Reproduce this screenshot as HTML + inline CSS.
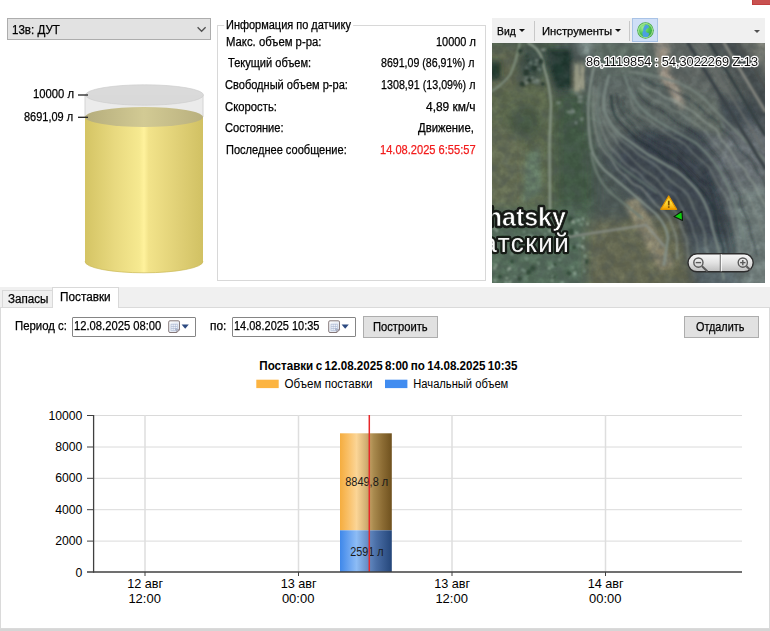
<!DOCTYPE html>
<html lang="ru">
<head>
<meta charset="utf-8">
<title>Поставки</title>
<style>
html,body{margin:0;padding:0;}
body{width:770px;height:631px;overflow:hidden;position:relative;background:#fff;
 font-family:"Liberation Sans",sans-serif;font-size:11px;color:#000;}
.a{position:absolute;white-space:nowrap;line-height:1;}
.t{position:absolute;white-space:nowrap;line-height:14px;height:14px;font-size:12px;transform-origin:0 0;-webkit-text-stroke:0.250px currentColor;}
.r{text-align:right;}
</style>
</head>
<body>

<!-- top-right red fragment -->
<div class="a" style="left:752px;top:0;width:18px;height:4.700px;background:#c85150;border-left:1px solid #c03c3c;border-bottom:1px solid #c24040;box-sizing:border-box;"></div>

<!-- combo box -->
<div class="a" style="left:7px;top:18px;width:204px;height:21.700px;background:#e2e2e2;border:1px solid #adadad;box-sizing:border-box;"></div>
<div class="t" style="left:11.8px;top:22.5px;font-size:12.5px;transform:scaleX(0.9251);">13в: ДУТ</div>
<svg class="a" style="left:195px;top:25px;" width="14" height="9" viewBox="0 0 14 9"><path d="M2.600 2.300 L6.600 6.300 L10.600 2.300" fill="none" stroke="#505050" stroke-width="1.300"/></svg>

<!-- cylinder -->
<svg class="a" style="left:0;top:70px;" width="216" height="215" viewBox="0 70 216 215">
 <defs>
  <linearGradient id="liq" x1="0" x2="1" y1="0" y2="0">
   <stop offset="0" stop-color="#d4c464"/>
   <stop offset="0.25" stop-color="#e8d97f"/>
   <stop offset="0.46" stop-color="#f6e990"/>
   <stop offset="0.5" stop-color="#fff29c"/>
   <stop offset="0.54" stop-color="#f2e38a"/>
   <stop offset="0.8" stop-color="#dfcf75"/>
   <stop offset="1" stop-color="#d1c163"/>
  </linearGradient>
  <linearGradient id="liqtop" x1="0" x2="1" y1="0" y2="0">
   <stop offset="0" stop-color="#b5ad7c"/>
   <stop offset="0.5" stop-color="#d2ca94"/>
   <stop offset="1" stop-color="#b9b07e"/>
  </linearGradient>
 </defs>
 <!-- glass body -->
 <path d="M85 95 L85 117 A59 10 0 0 0 203 117 L203 95 Z" fill="#ebebeb"/>
 <path d="M85 95 L85 117 M203 95 L203 117" stroke="#d4d4d4" stroke-width="1" fill="none"/>
 <!-- liquid body -->
 <path d="M85 117 L85 261.500 A59 11.300 0 0 0 203 261.500 L203 117 Z" fill="url(#liq)"/>
 <path d="M85 261.500 A59 11.300 0 0 0 203 261.500" fill="none" stroke="#cbb956" stroke-width="1" stroke-opacity="0.700"/>
 <!-- liquid top -->
 <ellipse cx="144" cy="117" rx="59" ry="10" fill="url(#liqtop)"/>
 <!-- glass top -->
 <ellipse cx="144.500" cy="95" rx="59" ry="10.200" fill="#d8d8d8" fill-opacity="0.95" stroke="#cfcfcf" stroke-width="0.700"/>
 <line x1="78" y1="95" x2="88" y2="95" stroke="#222" stroke-width="1.300"/>
 <line x1="78" y1="117.300" x2="88" y2="117.300" stroke="#222" stroke-width="1.300"/>
</svg>
<div class="t" style="left:33.1px;top:86.9px;font-size:12.3px;transform:scaleX(0.9156);">10000 л</div>
<div class="t" style="left:24.0px;top:109.5px;font-size:12.3px;transform:scaleX(0.8925);">8691,09 л</div>

<!-- group box -->
<div class="a" style="left:217px;top:24.600px;width:266.500px;height:254.700px;border:1px solid #d8d8d8;background:#fff;"></div>
<div class="t" style="left:226.2px;top:18.0px;font-size:12px;transform:scaleX(0.9147);background:#fff;box-shadow:-2px 0 0 #fff,2px 0 0 #fff;">Информация по датчику</div>
<div class="t" style="left:226.2px;top:35.3px;font-size:12px;transform:scaleX(0.9436);">Макс. объем р-ра:</div>
<div class="t" style="left:228.0px;top:56.3px;font-size:12px;transform:scaleX(0.9212);">Текущий объем:</div>
<div class="t" style="left:225.4px;top:78.1px;font-size:12px;transform:scaleX(0.9211);">Свободный объем р-ра:</div>
<div class="t" style="left:225.4px;top:99.7px;font-size:12px;transform:scaleX(0.9411);">Скорость:</div>
<div class="t" style="left:225.4px;top:121.3px;font-size:12px;transform:scaleX(0.9269);">Состояние:</div>
<div class="t" style="left:226.4px;top:142.9px;font-size:12px;transform:scaleX(0.9208);">Последнее сообщение:</div>
<div class="t" style="left:435.7px;top:35.3px;font-size:12px;transform:scaleX(0.9121);">10000 л</div>
<div class="t" style="left:381.1px;top:56.3px;font-size:12px;transform:scaleX(0.8847);">8691,09 (86,91%) л</div>
<div class="t" style="left:381.2px;top:78.1px;font-size:12px;transform:scaleX(0.8928);">1308,91 (13,09%) л</div>
<div class="t" style="left:426.0px;top:99.7px;font-size:12px;transform:scaleX(0.9964);">4,89 км/ч</div>
<div class="t" style="left:418.0px;top:121.3px;font-size:12px;transform:scaleX(0.9421);">Движение,</div>
<div class="t" style="left:380.0px;top:142.9px;font-size:12px;transform:scaleX(0.9245);color:#f21c1c;">14.08.2025 6:55:57</div>

<!-- map toolbar -->
<div class="a" style="left:492px;top:18px;width:273px;height:25px;background:#f0f0f0;"></div>
<div class="t" style="left:497.1px;top:23.6px;font-size:11.3px;transform:scaleX(0.915);">Вид</div>
<div class="a" style="left:519px;top:29px;width:0;height:0;border-left:3px solid transparent;border-right:3px solid transparent;border-top:3.500px solid #111;"></div>
<div class="a" style="left:534px;top:21px;width:1px;height:20px;background:#c8c8c8;"></div>
<div class="t" style="left:541.8px;top:23.6px;font-size:11.3px;transform:scaleX(0.995);">Инструменты</div>
<div class="a" style="left:615px;top:28.500px;width:0;height:0;border-left:3px solid transparent;border-right:3px solid transparent;border-top:3.500px solid #111;"></div>
<div class="a" style="left:629px;top:21px;width:1px;height:20px;background:#c8c8c8;"></div>
<div class="a" style="left:632px;top:18px;width:26px;height:24px;background:#cfdff7;border:1px solid #a9c3e6;box-sizing:border-box;"></div>
<svg class="a" style="left:635px;top:20px;" width="21" height="21" viewBox="-10.500 -10.500 21 21">
 <defs><radialGradient id="gl" cx="0.35" cy="0.3" r="0.8"><stop offset="0" stop-color="#a8ec9a"/><stop offset="0.5" stop-color="#4fcb55"/><stop offset="1" stop-color="#2f9e3c"/></radialGradient></defs>
 <circle cx="0" cy="0" r="8.300" fill="#45ad49"/>
 <circle cx="0" cy="0" r="7" fill="url(#gl)" stroke="#cdf0b4" stroke-width="0.800"/>
 <path d="M0.500,-6 C-1.500,-4.500 -2.800,-2 -2.200,0 C-3.800,2 -3.200,5 -1.800,6.600 L2.200,6.600 C3.200,5.500 3.800,4 3.200,2.600 C1.500,2.400 0,1.500 0.200,0 C0.500,-1.500 2,-2.500 3.600,-3 C3.200,-5 2,-6 0.500,-6Z" fill="#4d9fe0"/>
</svg>
<div class="a" style="left:754px;top:29.700px;width:0;height:0;border-left:3px solid transparent;border-right:3px solid transparent;border-top:3px solid #505050;"></div>

<!-- map -->
<svg class="a" style="left:492px;top:43px;" width="273" height="240" viewBox="0 0 273 240" font-family="Liberation Sans, sans-serif">
 <defs>
  <filter id="b8" x="-20%" y="-20%" width="140%" height="140%"><feGaussianBlur stdDeviation="6"/></filter>
  <filter id="b3" x="-20%" y="-20%" width="140%" height="140%"><feGaussianBlur stdDeviation="2.500"/></filter>
  <filter id="b1" x="-20%" y="-20%" width="140%" height="140%"><feGaussianBlur stdDeviation="0.800"/></filter>
  <filter id="b05" x="-5%" y="-20%" width="110%" height="140%"><feGaussianBlur stdDeviation="0.450"/></filter>
  <filter id="nz" x="0" y="0" width="100%" height="100%">
   <feTurbulence type="fractalNoise" baseFrequency="0.110" numOctaves="3" seed="7" result="n"/>
   <feColorMatrix type="matrix" values="0 0 0 0 0.500  0 0 0 0 0.500  0 0 0 0 0.500  1.600 0 0 0 -0.550"/>
  </filter>
  <filter id="nz2" x="0" y="0" width="100%" height="100%">
   <feTurbulence type="fractalNoise" baseFrequency="0.090" numOctaves="3" seed="23" result="n"/>
   <feColorMatrix type="matrix" values="0 0 0 0 0.070  0 0 0 0 0.090  0 0 0 0 0.090  0 1.600 0 0 -0.600"/>
  </filter>
  <linearGradient id="zg" x1="0" x2="0" y1="0" y2="1"><stop offset="0" stop-color="#fafafa"/><stop offset="0.5" stop-color="#e2e2e2"/><stop offset="1" stop-color="#bdbdbd"/></linearGradient>
  <linearGradient id="wg" x1="0" x2="0" y1="0" y2="1"><stop offset="0" stop-color="#f6b000"/><stop offset="0.450" stop-color="#ffe040"/><stop offset="1" stop-color="#f5a000"/></linearGradient>
  <clipPath id="mc"><rect x="0" y="0" width="273" height="240"/></clipPath>
 </defs>
 <g clip-path="url(#mc)">
 <rect x="0" y="0" width="273" height="240" fill="#485350"/>
 <g filter="url(#b8)">
  <rect x="-20" y="-20" width="85" height="60" fill="#48584a"/>
  <rect x="-20" y="30" width="82" height="140" fill="#586349"/>
  <rect x="-20" y="5" width="48" height="40" fill="#5c624c"/>
  <rect x="-20" y="85" width="50" height="80" fill="#61674f"/>
  <circle cx="33" cy="80" r="17" fill="#42533f"/>
    <polygon points="30,4 50,6 54,38 28,40 24,24" fill="#394942"/>
  <rect x="62" y="48" width="40" height="125" fill="#3d5240"/>
  <polygon points="100,25 230,25 290,100 290,260 200,260 150,170 100,100" fill="#41494f"/>
  <polygon points="95,-10 205,-10 218,60 192,88 150,84 122,112 100,100" fill="#58625f"/>
  <polygon points="100,-10 165,-10 170,30 105,32" fill="#5a6860"/>
  <polygon points="125,92 190,90 235,130 240,200 190,200 150,150 122,122" fill="#37404a"/>
  <polygon points="150,-20 290,-20 290,60 180,50" fill="#5c625e"/>
  <polygon points="215,90 290,80 290,200 240,180" fill="#646a6e"/>
  <polygon points="215,-10 250,-10 290,60 290,110" fill="#3f4648"/>
  <polygon points="245,-10 290,-10 290,50" fill="#76786f"/>
  <rect x="-20" y="165" width="120" height="95" fill="#4f6654"/>
  <polygon points="95,178 185,172 205,260 95,260" fill="#60644e"/>
  <polygon points="200,200 290,190 290,260 215,260" fill="#566468"/>
  <polygon points="240,150 290,140 290,260 250,260" fill="#6c7876"/>
 </g>
 <g filter="url(#b3)">
  <polygon points="-3,18 8,18 9,36 -3,38" fill="#1c3028"/>
  <polygon points="54,6 80,6 82,44 64,47 58,28" fill="#1b332a"/>
  <polygon points="132,160 146,154 182,222 168,228" fill="#88826a"/>
  <polygon points="163,-2 176,-2 178,30 196,62 188,66 168,34" fill="#968c7e"/>
  <polygon points="185,40 225,55 235,95 200,85" fill="#5e6862"/>
  <rect x="82" y="20" width="10" height="30" fill="#8a8c78"/>
  <polygon points="84,-2 100,-2 98,12 86,10" fill="#7a8a86"/>
  <polygon points="35,110 48,105 50,150 30,160" fill="#5f7460"/>
 </g>
 <rect x="0" y="0" width="273" height="240" filter="url(#nz)" opacity="0.550" style="mix-blend-mode:overlay"/>
 <rect x="0" y="0" width="273" height="240" filter="url(#nz2)" opacity="0.600"/>
 <g filter="url(#b1)" fill="none" stroke-linecap="round">
  <path d="M101.5,43.3 C101.5,44.8 101.6,48.9 101.4,52.2 C101.2,55.6 100.4,59.9 100.4,63.3 C100.4,66.6 101.0,69.3 101.4,72.4 C101.8,75.5 102.0,78.7 102.6,82.0 C103.2,85.3 103.8,88.7 104.8,92.2 C105.8,95.6 106.9,99.6 108.4,102.6 C109.9,105.6 112.2,108.2 114.0,110.3 C115.7,112.5 117.0,112.7 119.0,115.5 C121.0,118.4 123.8,124.4 126.1,127.2 C128.4,130.1 130.5,130.3 132.9,132.6 C135.4,134.8 138.2,138.7 140.8,140.7 C143.4,142.7 146.3,142.6 148.8,144.6 C151.2,146.5 153.1,149.2 155.7,152.2 C158.2,155.1 161.7,159.7 164.1,162.0 C166.4,164.4 167.4,164.4 169.5,166.4 C171.6,168.5 174.9,171.5 176.8,174.5 C178.6,177.4 179.5,180.8 180.7,184.2 C182.0,187.6 183.6,191.2 184.3,194.8 C185.0,198.4 184.7,202.3 184.9,205.7 C185.0,209.1 185.1,213.5 185.2,215.1" stroke="#95a098" stroke-width="2.1" stroke-opacity="0.56"/>
  <path d="M105.8,44.9 C105.5,46.9 104.1,53.3 103.7,56.7 C103.3,60.1 102.9,62.1 103.3,65.2 C103.8,68.2 105.2,71.5 106.2,74.8 C107.2,78.1 108.1,81.8 109.3,85.1 C110.4,88.5 111.8,91.6 113.2,94.7 C114.6,97.8 115.7,100.8 117.7,103.6 C119.7,106.3 123.2,108.8 125.2,111.0 C127.1,113.2 127.3,114.6 129.4,116.8 C131.4,119.0 134.6,121.9 137.5,124.1 C140.4,126.4 144.2,127.8 147.0,130.2 C149.8,132.5 151.5,135.9 154.0,138.3 C156.6,140.7 159.8,142.1 162.5,144.5 C165.2,147.0 168.0,150.1 170.1,152.9 C172.2,155.7 172.9,158.8 174.9,161.3 C177.0,163.9 180.7,165.7 182.7,168.1 C184.6,170.5 185.4,172.7 186.7,175.7 C188.0,178.8 188.9,182.8 190.2,186.4 C191.5,189.9 193.8,193.6 194.7,197.0 C195.5,200.3 195.1,203.0 195.4,206.4 C195.7,209.8 196.4,215.5 196.6,217.3" stroke="#95a098" stroke-width="2.2" stroke-opacity="0.40"/>
  <path d="M107.2,49.3 C107.0,51.0 105.5,55.9 105.7,59.3 C105.8,62.8 107.0,66.9 108.1,70.2 C109.2,73.4 110.9,75.8 112.3,78.7 C113.7,81.7 114.8,85.2 116.5,87.8 C118.2,90.5 120.8,92.2 122.5,94.7 C124.2,97.1 124.8,100.1 126.8,102.8 C128.9,105.4 132.3,108.2 134.8,110.6 C137.3,113.1 139.4,115.1 141.8,117.6 C144.1,120.0 146.4,122.8 149.2,125.1 C152.0,127.4 155.5,129.1 158.3,131.1 C161.1,133.1 163.6,134.6 166.0,137.0 C168.3,139.4 169.8,142.9 172.6,145.4 C175.4,147.9 180.2,149.2 182.8,151.9 C185.4,154.6 186.7,158.7 188.2,161.6 C189.8,164.4 190.1,166.1 191.9,169.1 C193.6,172.0 197.1,175.8 198.7,179.3 C200.4,182.8 200.7,187.0 201.7,190.0 C202.8,193.1 204.1,194.5 204.7,197.7 C205.4,200.9 205.3,205.2 205.7,209.1 C206.1,213.0 206.9,219.2 207.2,221.2" stroke="#95a098" stroke-width="1.3" stroke-opacity="0.55"/>
  <path d="M111.0,52.4 C111.0,53.9 111.0,58.6 111.2,61.7 C111.4,64.8 111.1,67.8 112.1,71.1 C113.2,74.3 115.3,78.1 117.3,81.3 C119.3,84.4 122.0,87.2 124.0,89.9 C126.1,92.6 127.1,95.0 129.6,97.4 C132.1,99.8 136.0,101.9 138.8,104.2 C141.6,106.5 143.5,109.1 146.2,111.2 C148.9,113.3 152.1,114.9 154.9,116.8 C157.8,118.6 160.7,120.1 163.3,122.3 C166.0,124.5 168.3,127.4 170.9,130.0 C173.5,132.6 176.4,135.8 179.0,138.1 C181.6,140.3 183.8,141.4 186.5,143.6 C189.3,145.9 193.1,148.3 195.5,151.5 C197.9,154.7 199.2,159.6 200.7,162.9 C202.2,166.2 203.0,168.1 204.5,171.1 C205.9,174.2 207.8,177.7 209.2,181.1 C210.6,184.4 212.2,187.9 213.0,191.4 C213.7,194.9 213.0,198.4 213.5,202.0 C214.1,205.5 215.6,209.3 216.2,212.8 C216.9,216.2 217.4,221.0 217.6,222.7" stroke="#8a968e" stroke-width="2.3" stroke-opacity="0.48"/>
  <path d="M119.1,52.8 C119.4,54.9 119.7,61.4 120.5,64.9 C121.2,68.5 121.7,70.8 123.6,74.0 C125.6,77.1 129.5,81.1 132.2,83.9 C134.8,86.7 136.8,88.5 139.3,90.8 C141.8,93.1 144.1,95.4 147.2,97.6 C150.3,99.8 154.7,102.0 157.8,104.0 C160.9,106.0 163.2,107.8 165.9,109.7 C168.5,111.7 170.6,113.8 173.8,115.8 C177.0,117.7 181.8,119.2 185.0,121.3 C188.2,123.5 190.3,126.0 192.9,128.6 C195.4,131.2 197.7,134.3 200.1,137.0 C202.6,139.7 205.2,142.1 207.6,144.7 C209.9,147.3 212.0,149.8 214.0,152.5 C216.0,155.3 218.1,158.2 219.6,161.3 C221.1,164.4 222.1,167.3 223.0,171.1 C224.0,174.8 224.7,179.8 225.4,183.6 C226.2,187.4 226.6,190.5 227.5,194.0 C228.5,197.6 230.7,201.1 231.3,204.8 C231.8,208.4 230.2,212.4 230.9,215.9 C231.6,219.5 234.8,224.4 235.5,226.1" stroke="#1f2b30" stroke-width="2.4" stroke-opacity="0.60"/>
  <path d="M124.6,51.5 C125.0,53.5 125.7,59.8 127.1,63.4 C128.5,67.1 130.8,70.5 132.9,73.5 C135.1,76.4 137.7,78.3 139.9,81.0 C142.1,83.6 143.7,87.0 146.2,89.3 C148.7,91.5 152.0,92.4 155.1,94.3 C158.2,96.3 161.6,98.9 164.9,100.8 C168.2,102.7 171.8,103.7 174.8,105.5 C177.9,107.4 180.3,109.7 183.2,112.1 C186.0,114.6 189.0,117.5 191.7,120.2 C194.5,122.8 196.9,125.5 199.5,128.0 C202.1,130.6 204.5,133.2 207.3,135.6 C210.0,138.0 213.8,139.7 215.9,142.5 C218.1,145.2 218.9,148.7 220.2,152.3 C221.5,155.8 222.6,159.9 223.9,163.6 C225.2,167.3 226.7,170.8 227.9,174.2 C229.1,177.6 230.0,180.6 231.0,183.9 C231.9,187.2 232.7,190.4 233.6,194.0 C234.4,197.6 235.5,202.1 236.2,205.6 C236.8,209.2 236.8,211.8 237.4,215.3 C238.0,218.8 239.2,224.8 239.6,226.7" stroke="#1f2b30" stroke-width="1.9" stroke-opacity="0.51"/>
  <path d="M131.5,54.5 C131.5,56.1 129.9,61.7 131.4,64.6 C133.0,67.5 137.7,69.3 140.8,71.9 C144.0,74.4 147.8,77.4 150.5,80.0 C153.3,82.7 154.7,85.6 157.1,87.7 C159.6,89.8 162.4,90.8 165.3,92.5 C168.2,94.2 171.5,96.0 174.6,97.9 C177.8,99.8 181.1,101.5 184.1,103.7 C187.0,105.9 189.6,108.8 192.2,111.1 C194.9,113.5 197.1,115.7 199.8,118.0 C202.6,120.3 205.7,122.2 208.5,125.0 C211.2,127.8 214.4,131.7 216.5,134.8 C218.6,137.9 219.6,140.3 221.2,143.5 C222.7,146.7 224.4,150.6 225.8,154.0 C227.3,157.3 228.8,160.2 230.0,163.6 C231.3,167.0 232.0,170.9 233.4,174.4 C234.7,177.9 237.1,181.2 238.2,184.6 C239.3,187.9 239.3,191.3 239.9,194.5 C240.5,197.8 241.5,200.5 241.8,204.2 C242.2,207.9 241.5,212.7 242.1,216.7 C242.7,220.7 244.8,226.0 245.4,227.9" stroke="#222e33" stroke-width="1.4" stroke-opacity="0.36"/>
  <path d="M138.3,53.1 C138.7,54.8 139.3,60.4 140.8,63.5 C142.3,66.5 144.5,69.4 147.1,71.5 C149.6,73.7 152.9,74.6 156.1,76.7 C159.3,78.7 163.2,81.9 166.1,84.0 C169.0,86.2 170.9,87.7 173.6,89.6 C176.3,91.5 179.2,93.4 182.4,95.2 C185.5,97.1 189.3,98.3 192.3,100.8 C195.3,103.2 197.9,107.0 200.6,109.8 C203.4,112.5 206.0,114.6 208.7,117.1 C211.5,119.6 214.8,121.8 217.1,124.8 C219.4,127.8 220.9,132.2 222.5,135.2 C224.2,138.2 225.0,140.0 226.8,142.9 C228.6,145.8 231.5,148.9 233.4,152.4 C235.3,156.0 237.0,160.4 238.2,164.1 C239.3,167.8 239.7,171.1 240.4,174.6 C241.1,178.1 241.5,181.7 242.4,185.3 C243.3,188.8 245.2,192.1 246.0,195.8 C246.8,199.5 247.0,204.0 247.4,207.6 C247.7,211.1 247.7,213.7 248.1,217.0 C248.6,220.3 249.8,225.8 250.1,227.5" stroke="#8a968e" stroke-width="1.6" stroke-opacity="0.54"/>
  <path d="M145.0,49.6 C146.0,50.7 148.8,54.2 151.0,56.4 C153.2,58.5 155.5,60.7 158.4,62.4 C161.3,64.1 165.2,64.8 168.2,66.6 C171.2,68.4 173.4,70.6 176.4,72.9 C179.4,75.3 183.3,78.7 186.3,80.7 C189.4,82.7 191.8,83.3 194.8,85.1 C197.7,86.8 201.1,89.1 204.0,91.2 C206.8,93.3 209.3,95.2 211.8,97.8 C214.3,100.4 216.3,103.7 218.8,106.6 C221.3,109.4 224.5,112.2 226.6,115.0 C228.7,117.9 229.5,120.7 231.2,123.6 C232.9,126.5 235.2,129.3 236.9,132.4 C238.5,135.5 239.4,138.7 241.1,142.1 C242.9,145.5 246.0,149.3 247.3,152.6 C248.5,156.0 247.8,158.9 248.7,162.1 C249.7,165.3 251.6,168.3 253.0,171.6 C254.3,174.9 255.8,178.4 256.8,181.8 C257.8,185.2 258.0,188.6 258.9,191.8 C259.8,194.9 261.1,197.5 262.1,200.8 C263.1,204.2 264.4,210.0 264.9,211.9" stroke="#222e33" stroke-width="2.0" stroke-opacity="0.48"/>
  <path d="M146.2,44.5 C147.5,45.6 151.5,48.9 154.2,51.1 C156.9,53.3 159.4,55.9 162.4,57.6 C165.4,59.2 169.4,59.5 172.3,61.0 C175.2,62.5 177.1,65.2 179.7,66.8 C182.4,68.3 185.1,68.6 188.3,70.4 C191.4,72.2 195.5,75.6 198.5,77.8 C201.5,79.9 204.0,81.3 206.4,83.0 C208.7,84.8 210.5,85.8 212.8,88.2 C215.1,90.6 218.0,94.8 220.4,97.6 C222.8,100.4 224.9,102.2 227.1,104.8 C229.3,107.3 231.8,110.0 233.8,113.0 C235.8,116.0 237.5,119.5 239.1,122.6 C240.7,125.8 241.8,128.9 243.3,131.8 C244.7,134.7 246.5,137.4 247.9,140.1 C249.3,142.8 250.0,145.0 251.8,147.9 C253.6,150.8 257.2,154.2 258.8,157.3 C260.5,160.4 260.5,163.2 261.8,166.3 C263.1,169.4 265.3,173.0 266.4,176.0 C267.5,179.0 267.6,181.3 268.6,184.4 C269.7,187.6 272.0,193.0 272.7,194.7" stroke="#95a098" stroke-width="2.0" stroke-opacity="0.37"/>
  <path d="M149.6,41.1 C150.5,41.7 152.2,43.5 154.7,44.8 C157.2,46.1 161.6,47.2 164.6,48.8 C167.7,50.4 170.1,53.0 173.2,54.5 C176.2,56.0 179.8,56.4 182.9,57.9 C185.9,59.3 188.6,61.4 191.5,63.2 C194.4,64.9 197.5,66.4 200.4,68.4 C203.2,70.4 206.3,73.2 208.6,75.1 C211.0,77.1 211.7,78.0 214.3,80.0 C217.0,82.0 222.3,84.5 224.7,87.2 C227.0,89.8 226.9,93.4 228.5,95.8 C230.1,98.3 232.4,99.4 234.5,102.0 C236.5,104.5 238.9,108.4 240.7,111.2 C242.5,114.0 243.4,116.3 245.4,118.9 C247.4,121.4 250.9,123.8 252.7,126.3 C254.6,128.9 255.1,131.7 256.6,134.2 C258.2,136.6 260.3,138.1 262.0,141.0 C263.7,143.8 265.2,148.1 266.8,151.1 C268.3,154.1 269.5,156.0 271.3,159.0 C273.1,161.9 276.2,165.7 277.6,168.6 C279.1,171.6 279.8,175.4 280.2,176.8" stroke="#95a098" stroke-width="2.2" stroke-opacity="0.60"/>
  <path d="M153.1,35.4 C154.4,36.4 157.7,39.9 160.4,41.2 C163.1,42.5 166.5,42.4 169.2,43.2 C171.9,43.9 173.8,44.4 176.7,45.7 C179.6,46.9 183.5,48.9 186.8,50.4 C190.1,52.0 193.7,53.5 196.3,55.1 C198.9,56.7 200.2,58.3 202.4,60.1 C204.6,61.9 207.1,63.7 209.4,65.8 C211.8,68.0 213.9,70.6 216.6,72.7 C219.3,74.9 223.3,76.4 225.5,78.7 C227.7,81.0 227.7,83.9 229.9,86.3 C232.0,88.7 235.8,90.6 238.3,93.3 C240.8,95.9 243.2,99.8 244.7,102.1 C246.3,104.4 245.7,105.1 247.6,107.2 C249.5,109.2 253.9,112.1 256.3,114.4 C258.7,116.7 260.3,118.7 261.9,121.2 C263.5,123.8 264.3,127.2 265.9,129.8 C267.5,132.4 269.6,134.4 271.4,136.8 C273.1,139.3 274.8,142.3 276.5,144.8 C278.2,147.2 279.8,149.0 281.5,151.5 C283.1,154.0 285.5,158.4 286.3,159.8" stroke="#2a363a" stroke-width="1.8" stroke-opacity="0.54"/>
 </g>
 <g filter="url(#b1)" fill="none" stroke-linecap="round" stroke-linejoin="round">
  <path d="M27.700,0 Q24,20 18,32 Q10,42 0,48" stroke="#80917f" stroke-width="2"/>
  <path d="M36,0 Q50,6 52,25 Q58,42 59,62 L57.500,100 L58,167" stroke="#8d9c8c" stroke-width="2.200"/>
  <path d="M75,194 L154,182 L172,203" stroke="#8a9088" stroke-width="2"/>
  <path d="M103,20 Q92,60 99,104 Q103,118 113,127.700 L136.600,147.500 L164,171 Q175,183 176,195 L172,222" stroke="#84928a" stroke-width="2.200"/>
  <path d="M116.800,32.600 Q110,55 112.800,68.300 Q118,82 128.700,92 L156.400,111.800 L184,127.700 Q200,140 208,151.500 Q218,168 219.800,183 L227.700,211 L231.700,236" stroke="#7c8a84" stroke-width="2.200"/>
  <path d="M132.600,32.600 Q138,52 148.500,64.300 Q160,76 176,84 L204,100 Q218,112 227.700,127.700 Q240,148 243.500,163 L251.500,195" stroke="#74847e" stroke-width="2"/>
  <path d="M136.600,28.700 Q152,30 168.300,34.600 Q184,38 196,44.500 Q210,52 219.800,64.300 L251.500,96 L273,117" stroke="#76827c" stroke-width="2"/>
  <path d="M99,110 Q104,140 125,155 L150,175" stroke="#6f7f76" stroke-width="2"/>
  <path d="M108,40 Q104,70 108,95 Q116,115 135,128 L165,150" stroke="#667670" stroke-width="1.600"/>
  <path d="M196,0 L273,125" stroke="#3a4346" stroke-width="3.500"/>
  <path d="M218,0 L273,92" stroke="#363f42" stroke-width="3"/>
  <path d="M206,0 L273,108" stroke="#6a6e6c" stroke-width="1.500"/>
  <path d="M232,0 L273,68" stroke="#82847e" stroke-width="3"/>
  <path d="M246,0 L273,44" stroke="#4a4e4c" stroke-width="2"/>
 </g>
<g filter="url(#b1)" opacity="0.850"><rect x="59.2" y="221.4" width="3.1" height="2.9" fill="#8fa898"/><rect x="79.8" y="223.9" width="2.0" height="1.6" fill="#9ab0a0"/><rect x="10.8" y="201.8" width="2.0" height="2.3" fill="#9ab0a0"/><rect x="1.2" y="183.6" width="2.1" height="2.9" fill="#a8b8a8"/><rect x="15.2" y="225.4" width="1.8" height="2.4" fill="#9ab0a0"/><rect x="12.6" y="238.0" width="1.5" height="2.7" fill="#9ab0a0"/><rect x="82.9" y="188.8" width="3.4" height="2.3" fill="#9ab0a0"/><rect x="17.3" y="237.7" width="1.9" height="2.9" fill="#a8b8a8"/><rect x="28.4" y="194.0" width="1.8" height="1.7" fill="#8fa898"/><rect x="31.5" y="226.9" width="2.7" height="2.4" fill="#7f9888"/><rect x="6.3" y="193.6" width="2.1" height="2.5" fill="#9ab0a0"/><rect x="45.7" y="218.7" width="1.6" height="3.0" fill="#8fa898"/><rect x="90.2" y="193.8" width="2.3" height="2.3" fill="#a8b8a8"/><rect x="34.8" y="209.7" width="1.5" height="1.6" fill="#9ab0a0"/><rect x="59.3" y="236.7" width="1.7" height="1.9" fill="#a8b8a8"/><rect x="32.7" y="193.5" width="2.5" height="2.7" fill="#8fa898"/><rect x="56.0" y="224.2" width="2.2" height="1.9" fill="#a8b8a8"/><rect x="89.9" y="174.6" width="2.2" height="2.4" fill="#9ab0a0"/><rect x="32.3" y="234.5" width="2.6" height="2.0" fill="#7f9888"/><rect x="29.1" y="225.5" width="2.8" height="2.6" fill="#7f9888"/><rect x="94.7" y="179.6" width="1.6" height="3.0" fill="#a8b8a8"/><rect x="3.0" y="221.3" width="2.2" height="1.9" fill="#a8b8a8"/><rect x="13.8" y="238.5" width="2.8" height="2.7" fill="#7f9888"/><rect x="79.7" y="177.4" width="3.0" height="2.9" fill="#a8b8a8"/><rect x="10.1" y="199.3" width="1.8" height="2.8" fill="#7f9888"/><rect x="13.4" y="234.4" width="2.7" height="1.8" fill="#a8b8a8"/><rect x="91.2" y="217.6" width="2.1" height="1.9" fill="#a8b8a8"/><rect x="38.4" y="178.5" width="2.3" height="3.0" fill="#9ab0a0"/><rect x="59.6" y="204.0" width="2.2" height="1.6" fill="#7f9888"/><rect x="48.9" y="207.5" width="2.5" height="1.6" fill="#7f9888"/><rect x="66.0" y="215.8" width="3.0" height="2.0" fill="#7f9888"/><rect x="79.3" y="187.1" width="3.5" height="2.6" fill="#7f9888"/><rect x="61.7" y="209.8" width="1.5" height="2.3" fill="#7f9888"/><rect x="31.0" y="187.7" width="2.1" height="2.3" fill="#7f9888"/><rect x="33.0" y="214.4" width="3.0" height="2.7" fill="#7f9888"/><rect x="87.6" y="180.4" width="3.2" height="2.2" fill="#7f9888"/><rect x="90.9" y="205.3" width="2.6" height="1.7" fill="#7f9888"/><rect x="89.1" y="202.4" width="2.9" height="2.6" fill="#a8b8a8"/><rect x="16.3" y="224.2" width="2.7" height="2.5" fill="#a8b8a8"/><rect x="28.8" y="207.8" width="3.2" height="1.9" fill="#8fa898"/><rect x="18.6" y="210.2" width="2.7" height="1.8" fill="#9ab0a0"/><rect x="59.9" y="171.0" width="2.4" height="1.8" fill="#8fa898"/><rect x="84.7" y="176.0" width="3.4" height="2.2" fill="#8fa898"/><rect x="39.5" y="193.3" width="2.8" height="1.6" fill="#9ab0a0"/><rect x="22.6" y="233.0" width="1.5" height="2.1" fill="#7f9888"/><rect x="81.3" y="230.4" width="2.9" height="2.3" fill="#8fa898"/><rect x="52.2" y="189.7" width="2.1" height="2.3" fill="#7f9888"/><rect x="91.0" y="226.9" width="2.3" height="2.7" fill="#7f9888"/><rect x="44.4" y="179.3" width="2.3" height="2.2" fill="#9ab0a0"/><rect x="92.0" y="211.8" width="2.2" height="2.8" fill="#8fa898"/><rect x="36.3" y="191.5" width="3.3" height="2.3" fill="#7f9888"/><rect x="59.8" y="232.2" width="2.3" height="2.1" fill="#9ab0a0"/><rect x="46.9" y="202.5" width="2.9" height="2.1" fill="#9ab0a0"/><rect x="56.6" y="186.7" width="3.5" height="2.2" fill="#a8b8a8"/><rect x="1.9" y="236.1" width="2.1" height="2.9" fill="#9ab0a0"/><rect x="45.3" y="176.8" width="2.7" height="2.2" fill="#7f9888"/><rect x="3.8" y="177.8" width="2.3" height="2.2" fill="#7f9888"/><rect x="23.1" y="202.1" width="1.6" height="2.2" fill="#9ab0a0"/><rect x="68.5" y="188.6" width="2.5" height="3.0" fill="#8fa898"/><rect x="1.5" y="177.1" width="2.1" height="2.6" fill="#7f9888"/><rect x="69.5" y="169.9" width="2.2" height="2.5" fill="#9ab0a0"/><rect x="3.5" y="186.2" width="2.4" height="2.9" fill="#9ab0a0"/><rect x="1.4" y="224.0" width="2.4" height="2.4" fill="#a8b8a8"/><rect x="81.6" y="228.6" width="2.5" height="2.5" fill="#9ab0a0"/><rect x="85.4" y="201.5" width="3.0" height="2.0" fill="#8fa898"/><rect x="66.0" y="199.2" width="2.1" height="2.7" fill="#7f9888"/><rect x="13.6" y="202.4" width="2.6" height="2.2" fill="#7f9888"/><rect x="51.1" y="198.6" width="2.6" height="1.6" fill="#9ab0a0"/><rect x="25.4" y="174.1" width="1.6" height="2.9" fill="#7f9888"/><rect x="68.6" y="238.5" width="3.5" height="2.6" fill="#8fa898"/><circle cx="11.7" cy="176.8" r="2.4" fill="#2f4636"/><circle cx="78.3" cy="176.0" r="2.8" fill="#2f4636"/><circle cx="94.4" cy="218.8" r="2.2" fill="#2f4636"/><circle cx="17.4" cy="181.3" r="2.7" fill="#2f4636"/><circle cx="6.4" cy="183.3" r="2.3" fill="#2f4636"/><circle cx="62.7" cy="221.7" r="1.9" fill="#2f4636"/><circle cx="54.3" cy="176.5" r="2.1" fill="#2f4636"/><circle cx="59.3" cy="168.7" r="1.6" fill="#2f4636"/><circle cx="65.1" cy="203.2" r="2.0" fill="#2f4636"/><circle cx="62.3" cy="233.9" r="1.7" fill="#2f4636"/><circle cx="28.0" cy="208.9" r="2.5" fill="#2f4636"/><circle cx="27.6" cy="235.8" r="2.3" fill="#2f4636"/><circle cx="21.0" cy="172.5" r="1.9" fill="#2f4636"/><circle cx="79.1" cy="188.4" r="3.0" fill="#2f4636"/><circle cx="76.8" cy="230.2" r="2.2" fill="#2f4636"/><circle cx="36.9" cy="177.4" r="1.5" fill="#2f4636"/><circle cx="32.5" cy="209.3" r="1.6" fill="#2f4636"/><circle cx="82.0" cy="204.5" r="2.2" fill="#2f4636"/><circle cx="37.0" cy="201.3" r="2.9" fill="#2f4636"/><circle cx="10.2" cy="206.2" r="2.3" fill="#2f4636"/><circle cx="36.5" cy="229.1" r="2.9" fill="#2f4636"/><circle cx="40.8" cy="225.2" r="2.6" fill="#2f4636"/><circle cx="8.0" cy="233.6" r="2.2" fill="#2f4636"/><circle cx="20.1" cy="218.5" r="2.1" fill="#2f4636"/><circle cx="79.4" cy="188.9" r="2.9" fill="#2f4636"/></g>
<g filter="url(#b1)" opacity="0.800"><rect x="33.2" y="23.6" width="3.1" height="2.4" fill="#6c7c74" transform="rotate(5 33.2 23.6)"/><rect x="41.3" y="36.7" width="3.4" height="2.3" fill="#7d8d84" transform="rotate(30 41.3 36.7)"/><rect x="38.3" y="34.1" width="3.4" height="2.5" fill="#7d8d84" transform="rotate(-16 38.3 34.1)"/><rect x="31.3" y="37.3" width="3.2" height="1.5" fill="#7d8d84" transform="rotate(-20 31.3 37.3)"/><rect x="49.1" y="5.5" width="4.3" height="2.7" fill="#8c9a90" transform="rotate(-2 49.1 5.5)"/><rect x="43.8" y="35.6" width="4.1" height="2.9" fill="#8c9a90" transform="rotate(14 43.8 35.6)"/><rect x="40.7" y="38.7" width="2.4" height="2.0" fill="#7d8d84" transform="rotate(-22 40.7 38.7)"/><rect x="32.8" y="38.8" width="3.3" height="2.4" fill="#8c9a90" transform="rotate(-5 32.8 38.8)"/><rect x="46.3" y="24.7" width="3.6" height="2.1" fill="#7d8d84" transform="rotate(24 46.3 24.7)"/><rect x="43.0" y="37.4" width="4.6" height="3.0" fill="#6c7c74" transform="rotate(12 43.0 37.4)"/><rect x="43.4" y="15.8" width="3.6" height="2.4" fill="#7d8d84" transform="rotate(13 43.4 15.8)"/><rect x="32.6" y="33.9" width="3.7" height="1.9" fill="#7d8d84" transform="rotate(-1 32.6 33.9)"/><rect x="42.1" y="21.4" width="3.0" height="1.6" fill="#7d8d84" transform="rotate(-29 42.1 21.4)"/><rect x="37.4" y="18.9" width="2.4" height="2.4" fill="#7d8d84" transform="rotate(-7 37.4 18.9)"/><circle cx="42.1" cy="24.9" r="2.9" fill="#22342c"/><circle cx="34.7" cy="13.0" r="1.6" fill="#22342c"/><circle cx="28.2" cy="8.1" r="2.3" fill="#22342c"/><circle cx="50.8" cy="40.9" r="1.9" fill="#22342c"/><circle cx="34.3" cy="30.2" r="3.0" fill="#22342c"/><circle cx="36.2" cy="17.7" r="1.7" fill="#22342c"/><circle cx="48.7" cy="18.3" r="2.8" fill="#22342c"/><circle cx="37.3" cy="36.9" r="2.5" fill="#22342c"/><circle cx="30.5" cy="41.0" r="2.7" fill="#22342c"/><circle cx="34.5" cy="28.1" r="2.6" fill="#22342c"/><rect x="94.0" y="59.7" width="3.0" height="2.6" fill="#6a7a72"/><rect x="64.4" y="58.9" width="4.3" height="2.0" fill="#889690"/><rect x="82.9" y="48.8" width="4.5" height="2.7" fill="#6a7a72"/><rect x="85.7" y="56.7" width="4.8" height="3.5" fill="#7a8880"/><rect x="82.9" y="78.4" width="2.1" height="2.7" fill="#889690"/><rect x="78.6" y="65.3" width="3.3" height="2.7" fill="#6a7a72"/><rect x="88.3" y="74.4" width="3.1" height="3.6" fill="#7a8880"/><rect x="88.7" y="45.0" width="4.3" height="3.5" fill="#6a7a72"/><rect x="80.0" y="67.5" width="3.1" height="2.7" fill="#889690"/><rect x="77.9" y="69.1" width="2.4" height="2.6" fill="#6a7a72"/><rect x="85.6" y="52.1" width="5.2" height="3.9" fill="#7a8880"/><rect x="74.8" y="67.4" width="5.5" height="2.9" fill="#7a8880"/><rect x="83" y="22" width="4" height="26" fill="#9a9c86"/><rect x="89" y="24" width="3" height="22" fill="#a0a08a"/></g>
 <!-- labels -->
 <g filter="url(#b05)">
 <text x="-5.300" y="182.600" font-weight="bold" font-size="25" fill="#151a15" stroke="#151a15" stroke-width="4.600" stroke-linejoin="round">hatsky</text>
 <text x="-5.300" y="182.600" font-weight="bold" font-size="25" fill="#fff" stroke="#151a15" stroke-width="0.700">hatsky</text>
 <text x="-9.700" y="209.300" font-size="26" letter-spacing="1.500" fill="#f6f6f6" stroke="#151a15" stroke-width="4.600" stroke-linejoin="round" paint-order="stroke">атский</text>
 </g>
 <text x="94" y="22.500" font-size="12.500" fill="#111" stroke="#fff" stroke-width="2.500" stroke-linejoin="round" paint-order="stroke" textLength="172" lengthAdjust="spacingAndGlyphs">86,1119854 : 54,3022269 Z:13</text>
 <!-- warning icon -->
 <g filter="url(#b05)">
 <path d="M176.700,153 L184.600,166.300 L168.800,166.300 Z" fill="url(#wg)" stroke="#e29400" stroke-width="1.200" stroke-linejoin="round"/>
 <rect x="175.900" y="157.700" width="1.700" height="4.700" fill="#7a4e00"/><rect x="175.900" y="163.300" width="1.700" height="1.500" fill="#7a4e00"/>
 <!-- green arrow -->
 <path d="M182,173.600 L190,168.300 L190.500,177.400 Z" fill="#10d010" stroke="#0c1a0c" stroke-width="1.100" stroke-linejoin="round"/>
 </g>
 <!-- zoom control -->
 <rect x="196" y="210.800" width="65.200" height="18" rx="9" fill="url(#zg)" stroke="#2e2e2e" stroke-width="1.400"/>
 <line x1="228.300" x2="228.300" y1="211.300" y2="228.300" stroke="#555" stroke-width="1"/>
 <line x1="229.300" x2="229.300" y1="211.300" y2="228.300" stroke="#fff" stroke-width="1"/>
 <g fill="none" stroke="#5a5a5a" stroke-width="1.400" filter="url(#b05)">
  <circle cx="206.400" cy="219.600" r="4.600"/><line x1="210" y1="223.300" x2="215.500" y2="228.500" stroke-width="2"/><line x1="203.700" y1="219.600" x2="209.100" y2="219.600"/>
  <circle cx="250.800" cy="219.600" r="4.600"/><line x1="254.400" y1="223.300" x2="258.300" y2="227" stroke-width="2"/><line x1="248.100" y1="219.600" x2="253.500" y2="219.600"/><line x1="250.800" y1="216.900" x2="250.800" y2="222.300"/>
 </g>
 </g>
</svg>


<!-- tab strip -->
<div class="a" style="left:0;top:287px;width:770px;height:344px;background:#f0f0f0;"></div>
<div class="a" style="left:0;top:629px;width:770px;height:2px;background:#d6d6d6;"></div>
<div class="a" style="left:0;top:307px;width:770px;height:322px;background:#fff;border:1px solid #dadada;box-sizing:border-box;"></div>
<div class="a" style="left:2px;top:290px;width:51px;height:17px;border:1px solid #d9d9d9;border-bottom:none;box-sizing:border-box;background:#f0f0f0;"></div>
<div class="t" style="left:8.0px;top:291.5px;font-size:12px;transform:scaleX(0.9678);">Запасы</div>
<div class="a" style="left:52px;top:287px;width:67px;height:21px;border:1px solid #d9d9d9;border-bottom:none;box-sizing:border-box;background:#fff;"></div>
<div class="t" style="left:60.2px;top:289.8px;font-size:12px;transform:scaleX(0.9802);">Поставки</div>

<!-- period row -->
<div class="t" style="left:15.2px;top:319.0px;font-size:12px;transform:scaleX(0.9470);">Период с:</div>
<div class="a" style="left:72px;top:316.500px;width:124px;height:20px;border:1px solid #858585;border-radius:1px;box-sizing:border-box;background:#fff;"></div>
<div class="t" style="left:73.9px;top:319.0px;font-size:12px;transform:scaleX(0.935);">12.08.2025 08:00</div>
<svg class="a" style="left:167.500px;top:319px;" width="24" height="16" viewBox="0 0 24 16">
 <defs><linearGradient id="cg1" x1="0" x2="1" y1="0" y2="1"><stop offset="0" stop-color="#ffffff"/><stop offset="1" stop-color="#d5deee"/></linearGradient></defs>
 <path d="M2,1.800 H10.200 Q11.500,1.800 11.500,3.100 V10.800 L8.800,13.500 H2 Q0.700,13.500 0.700,12.200 V3.100 Q0.700,1.800 2,1.800 Z" fill="url(#cg1)" stroke="#86797a" stroke-width="1"/>
 <path d="M8.800,13.500 V10.800 H11.500" fill="none" stroke="#86797a" stroke-width="0.800"/>
 <rect x="2.700" y="4.800" width="6.900" height="6.900" fill="#a9b5cf"/>
 <g fill="#eef2fa"><rect x="3.300" y="5.500" width="1.600" height="1.500"/><rect x="5.400" y="5.500" width="1.600" height="1.500"/><rect x="7.500" y="5.500" width="1.600" height="1.500"/><rect x="3.300" y="7.600" width="1.600" height="1.500"/><rect x="5.400" y="7.600" width="1.600" height="1.500"/><rect x="7.500" y="7.600" width="1.600" height="1.500"/><rect x="3.300" y="9.700" width="1.600" height="1.500"/><rect x="5.400" y="9.700" width="1.600" height="1.500"/></g>
 <path d="M13.600,5.500 H20.800 L17.200,9.800 Z" fill="#2c4a80"/>
</svg>
<div class="t" style="left:209.7px;top:319.0px;font-size:12px;transform:scaleX(0.9921);">по:</div>
<div class="a" style="left:232px;top:316.500px;width:124px;height:20px;border:1px solid #858585;border-radius:1px;box-sizing:border-box;background:#fff;"></div>
<div class="t" style="left:234.3px;top:319.0px;font-size:12px;transform:scaleX(0.915);">14.08.2025 10:35</div>
<svg class="a" style="left:328px;top:319px;" width="24" height="16" viewBox="0 0 24 16">
 <defs><linearGradient id="cg2" x1="0" x2="1" y1="0" y2="1"><stop offset="0" stop-color="#ffffff"/><stop offset="1" stop-color="#d5deee"/></linearGradient></defs>
 <path d="M2,1.800 H10.200 Q11.500,1.800 11.500,3.100 V10.800 L8.800,13.500 H2 Q0.700,13.500 0.700,12.200 V3.100 Q0.700,1.800 2,1.800 Z" fill="url(#cg2)" stroke="#86797a" stroke-width="1"/>
 <path d="M8.800,13.500 V10.800 H11.500" fill="none" stroke="#86797a" stroke-width="0.800"/>
 <rect x="2.700" y="4.800" width="6.900" height="6.900" fill="#a9b5cf"/>
 <g fill="#eef2fa"><rect x="3.300" y="5.500" width="1.600" height="1.500"/><rect x="5.400" y="5.500" width="1.600" height="1.500"/><rect x="7.500" y="5.500" width="1.600" height="1.500"/><rect x="3.300" y="7.600" width="1.600" height="1.500"/><rect x="5.400" y="7.600" width="1.600" height="1.500"/><rect x="7.500" y="7.600" width="1.600" height="1.500"/><rect x="3.300" y="9.700" width="1.600" height="1.500"/><rect x="5.400" y="9.700" width="1.600" height="1.500"/></g>
 <path d="M13.600,5.500 H20.800 L17.200,9.800 Z" fill="#2c4a80"/>
</svg>
<div class="a" style="left:363px;top:316px;width:75px;height:22px;border:1px solid #adadad;box-sizing:border-box;background:#e1e1e1;"></div>
<div class="t" style="left:372.7px;top:320.2px;font-size:12px;transform:scaleX(0.9321);">Построить</div>
<div class="a" style="left:684px;top:316px;width:75px;height:22px;border:1px solid #adadad;box-sizing:border-box;background:#e1e1e1;"></div>
<div class="t" style="left:696.0px;top:320.2px;font-size:12px;transform:scaleX(0.9025);">Отдалить</div>

<!-- chart -->
<svg class="a" style="left:0;top:350px;" width="770" height="275" viewBox="0 350 770 275" font-family="Liberation Sans, sans-serif">
 <defs>
  <linearGradient id="go" x1="0" x2="1" y1="0" y2="0">
   <stop offset="0" stop-color="#f5ad3f"/>
   <stop offset="0.16" stop-color="#f9c068"/>
   <stop offset="0.32" stop-color="#fbd596"/>
   <stop offset="0.5" stop-color="#d3b074"/>
   <stop offset="0.65" stop-color="#a98a4e"/>
   <stop offset="0.82" stop-color="#8c6c34"/>
   <stop offset="1" stop-color="#6f511e"/>
  </linearGradient>
  <linearGradient id="gb" x1="0" x2="1" y1="0" y2="0">
   <stop offset="0" stop-color="#3f88ea"/>
   <stop offset="0.16" stop-color="#67a2f0"/>
   <stop offset="0.32" stop-color="#8dbcf5"/>
   <stop offset="0.5" stop-color="#6d95cc"/>
   <stop offset="0.7" stop-color="#4a6ea6"/>
   <stop offset="1" stop-color="#24467a"/>
  </linearGradient>
 </defs>
 <text x="259.300" y="369.600" font-size="12" font-weight="bold" word-spacing="-0.800" textLength="258.200" lengthAdjust="spacingAndGlyphs">Поставки с 12.08.2025 8:00 по 14.08.2025 10:35</text>
 <rect x="256.300" y="379.700" width="22.400" height="8.400" fill="#fcb441"/>
 <text x="284.500" y="388.300" font-size="12" textLength="88" lengthAdjust="spacingAndGlyphs">Объем поставки</text>
 <rect x="385" y="379.700" width="22.400" height="8.400" fill="#418cf0"/>
 <text x="413.300" y="388.300" font-size="12" textLength="95" lengthAdjust="spacingAndGlyphs">Начальный объем</text>
 <g stroke="#dadada" stroke-width="1">
  <line x1="94" x2="742" y1="415.500" y2="415.500"/>
  <line x1="94" x2="742" y1="447" y2="447"/>
  <line x1="94" x2="742" y1="478.300" y2="478.300"/>
  <line x1="94" x2="742" y1="509.700" y2="509.700"/>
  <line x1="94" x2="742" y1="541.100" y2="541.100"/>
  <line x1="145" x2="145" y1="415" y2="572" stroke="#dedede" stroke-width="1.500"/>
  <line x1="298.500" x2="298.500" y1="415" y2="572" stroke="#dedede" stroke-width="1.500"/>
  <line x1="452" x2="452" y1="415" y2="572" stroke="#dedede" stroke-width="1.500"/>
  <line x1="605.500" x2="605.500" y1="415" y2="572" stroke="#dedede" stroke-width="1.500"/>
 </g>
 <rect x="340" y="433.300" width="51.800" height="97" fill="url(#go)"/>
 <rect x="340" y="530.300" width="51.800" height="41.700" fill="url(#gb)"/>
 <text x="345.200" y="486.300" font-size="12" textLength="43" lengthAdjust="spacingAndGlyphs" fill="#1a1a1a">8849,8 л</text>
 <text x="350.200" y="556.200" font-size="12" textLength="33.400" lengthAdjust="spacingAndGlyphs" fill="#1a1a1a">2591 л</text>
 <line x1="369.300" x2="369.300" y1="415" y2="572" stroke="#e8282a" stroke-width="1.500"/>
 <g stroke="#404040" stroke-width="1">
  <line x1="93.600" x2="93.600" y1="415" y2="572.700" stroke-width="1.300"/>
  <line x1="87" x2="742" y1="572" y2="572" stroke-width="1.400"/>
  <line x1="87" x2="94" y1="415.500" y2="415.500"/>
  <line x1="87" x2="94" y1="447" y2="447"/>
  <line x1="87" x2="94" y1="478.300" y2="478.300"/>
  <line x1="87" x2="94" y1="509.700" y2="509.700"/>
  <line x1="87" x2="94" y1="541.100" y2="541.100"/>
  <line x1="145" x2="145" y1="572" y2="576"/>
  <line x1="298.500" x2="298.500" y1="572" y2="576"/>
  <line x1="452" x2="452" y1="572" y2="576"/>
  <line x1="605.500" x2="605.500" y1="572" y2="576"/>
 </g>
 <g font-size="13">
  <text x="48.4" y="419.6" textLength="34" lengthAdjust="spacingAndGlyphs">10000</text>
  <text x="55.2" y="451.1" textLength="27.2" lengthAdjust="spacingAndGlyphs">8000</text>
  <text x="55.2" y="482.4" textLength="27.2" lengthAdjust="spacingAndGlyphs">6000</text>
  <text x="55.2" y="513.8" textLength="27.2" lengthAdjust="spacingAndGlyphs">4000</text>
  <text x="55.2" y="545.2" textLength="27.2" lengthAdjust="spacingAndGlyphs">2000</text>
  <text x="75.6" y="576.6" textLength="6.8" lengthAdjust="spacingAndGlyphs">0</text>
 </g>
 <g font-size="13">
  <text x="127.2" y="587.600" textLength="36" lengthAdjust="spacingAndGlyphs">12 авг</text><text x="128.4" y="603.200" textLength="32.500" lengthAdjust="spacingAndGlyphs">12:00</text>
  <text x="280.7" y="587.600" textLength="36" lengthAdjust="spacingAndGlyphs">13 авг</text><text x="281.9" y="603.200" textLength="32.500" lengthAdjust="spacingAndGlyphs">00:00</text>
  <text x="434.2" y="587.600" textLength="36" lengthAdjust="spacingAndGlyphs">13 авг</text><text x="435.4" y="603.200" textLength="32.500" lengthAdjust="spacingAndGlyphs">12:00</text>
  <text x="587.7" y="587.600" textLength="36" lengthAdjust="spacingAndGlyphs">14 авг</text><text x="589.0" y="603.200" textLength="32.500" lengthAdjust="spacingAndGlyphs">00:00</text>
 </g>
</svg>

</body>
</html>
